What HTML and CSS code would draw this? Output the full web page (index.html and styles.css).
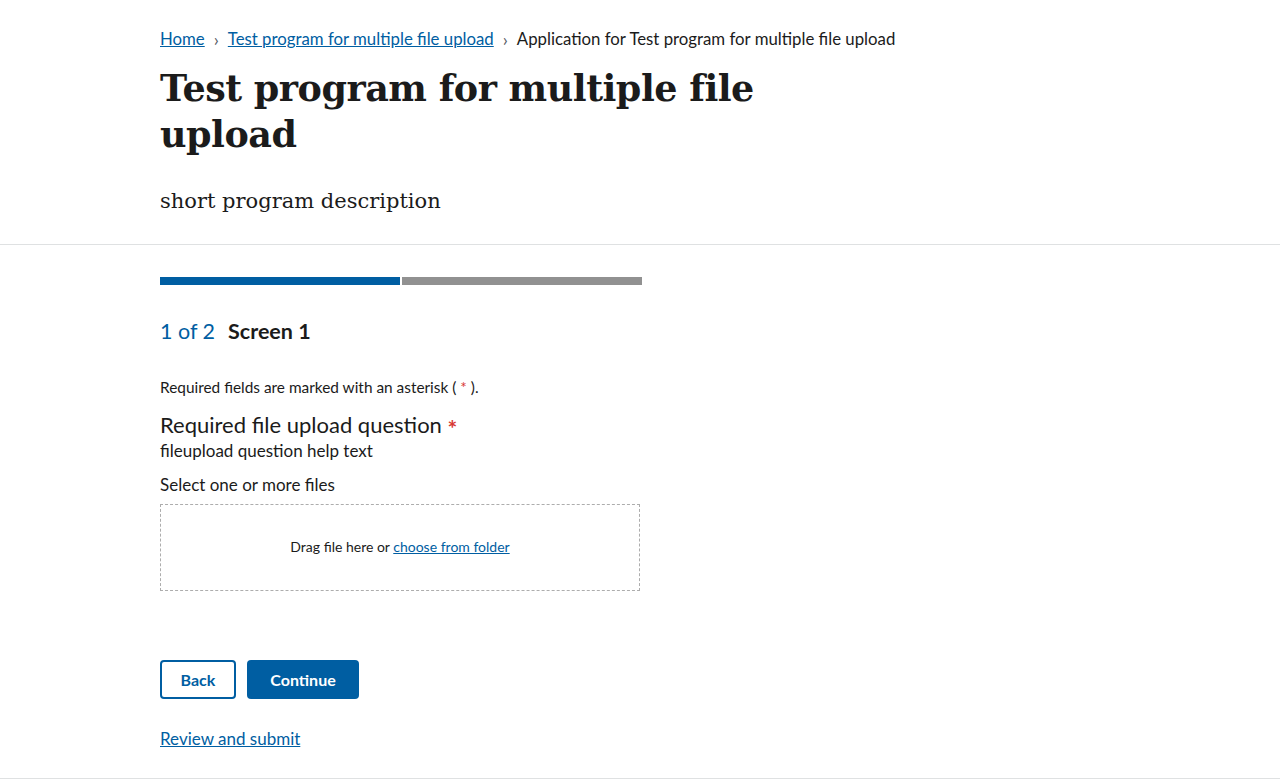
FILE: index.html
```html
<!DOCTYPE html>
<html lang="en">
<head>
<meta charset="utf-8">
<title>Application for Test program for multiple file upload</title>
<link rel="stylesheet" href="styles.css">
</head>
<body>
<header class="page-header">
  <div class="container">
    <nav class="breadcrumb" aria-label="Breadcrumbs">
      <a href="#" class="crumb-link">Home</a>
      <span class="crumb-sep">›</span>
      <a href="#" class="crumb-link">Test program for multiple file upload</a>
      <span class="crumb-sep">›</span>
      <span class="crumb-current">Application for Test program for multiple file upload</span>
    </nav>
    <h1 class="title">Test program for multiple file upload</h1>
    <p class="description">short program description</p>
  </div>
</header>
<main class="container main">
  <div class="progress">
    <div class="progress-seg done"></div>
    <div class="progress-seg todo"></div>
  </div>
  <h2 class="step"><span class="step-count">1 of 2</span><span class="step-name">Screen 1</span></h2>
  <p class="required-note">Required fields are marked with an asterisk ( <span class="asterisk">*</span> ).</p>
  <div class="question">
    <div class="q-label">Required file upload question <span class="asterisk big">*</span></div>
    <div class="q-help">fileupload question help text</div>
    <div class="q-select">Select one or more files</div>
    <div class="dropzone">
      <span>Drag file here or <a href="#" class="link">choose from folder</a></span>
    </div>
  </div>
  <div class="actions">
    <button class="btn btn-outline">Back</button>
    <button class="btn btn-primary">Continue</button>
  </div>
  <a href="#" class="link review">Review and submit</a>
</main>
<div class="footer-line"></div>
</body>
</html>
```

FILE: styles.css
```css
* { box-sizing: border-box; }
html, body { margin: 0; padding: 0; }
body {
  font-family: Lato, "Open Sans", sans-serif;
  color: #1b1b1b;
  background: #fff;
}
.container {
  padding-left: 160px;
  padding-right: 160px;
}
.page-header {
  border-bottom: 1px solid #dfe1e2;
  padding-top: 28px;
  padding-bottom: 28px;
}
.breadcrumb {
  font-size: 16.8px;
  line-height: 22px;
  display: flex;
  align-items: center;
  gap: 8px;
}
.crumb-link { color: #005ea2; text-decoration: underline; }
.crumb-sep { color: #565c65; font-size: 18px; padding: 0 1px; }
.crumb-current { color: #1b1b1b; }
.title {
  font-family: "DejaVu Serif", serif;
  font-weight: bold;
  font-size: 36.5px;
  line-height: 46px;
  margin: 16px 0 0;
  max-width: 620px;
  letter-spacing: -0.5px;
}
.description {
  font-family: "DejaVu Serif", serif;
  font-size: 21px;
  line-height: 30px;
  margin: 28px 0 0;
}
.main { padding-top: 32px; padding-bottom: 28px; }
.progress { display: flex; gap: 2px; width: 482px; }
.progress-seg { height: 8px; flex: 1; }
.done { background: #005ea2; }
.todo { background: #919191; }
.step {
  margin: 32px 0 0;
  font-size: 21.5px;
  line-height: 28px;
  display: flex;
  gap: 13px;
}
.step-count { color: #005ea2; font-weight: normal; }
.step-name { font-weight: bold; }
.required-note {
  font-size: 15.4px;
  line-height: 20px;
  margin: 32px 0 0;
}
.asterisk { color: #d83933; }
.asterisk.big {
  display: inline-block;
  font-weight: bold;
  font-size: 23px;
  line-height: 20px;
  transform: translateY(4px);
}
.question { width: 480px; }
.q-label {
  font-size: 22px;
  line-height: 28px;
  margin-top: 14px;
}
.q-help { font-size: 17px; line-height: 23px; }
.q-select { font-size: 17px; line-height: 22px; margin-top: 12px; }
.dropzone {
  margin-top: 8px;
  border: 1px dashed #adadad;
  height: 87px;
  padding-bottom: 3px;
  display: flex;
  align-items: center;
  justify-content: center;
  font-size: 14px;
}
.link { color: #005ea2; text-decoration: underline; }
.actions { display: flex; gap: 11px; margin-top: 69px; }
.btn {
  font-family: inherit;
  font-weight: bold;
  font-size: 16px;
  height: 39px;
  border-radius: 4px;
  cursor: pointer;
}
.btn-outline {
  background: #fff;
  color: #005ea2;
  border: 2px solid #005ea2;
  padding: 0 18.5px;
}
.btn-primary {
  background: #005ea2;
  color: #fff;
  border: none;
  padding: 0 23.5px;
}
.review {
  display: inline-block;
  margin-top: 29px;
  font-size: 17px;
  line-height: 22px;
}
.footer-line { border-top: 1px solid #dfe1e2; }
```
